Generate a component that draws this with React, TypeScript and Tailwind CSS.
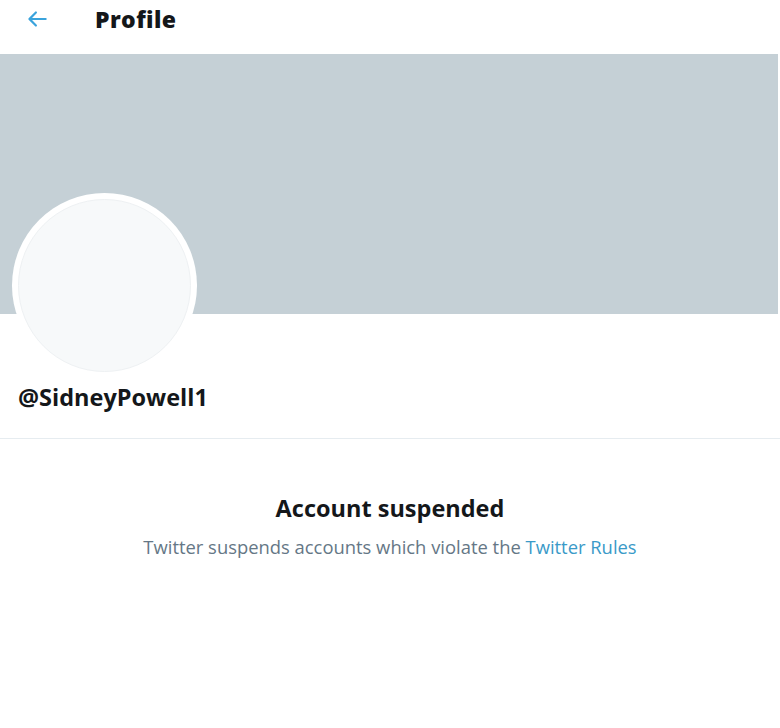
import React from 'react';

const font = { fontFamily: '"Open Sans", "Noto Sans", sans-serif' };

const BackArrow: React.FC = () => (
    <svg viewBox="0 0 24 24" className="w-[26px] h-[26px]" fill="#3aa3dc">
        <path d="M20 11H7.414l4.293-4.293a1 1 0 0 0-1.414-1.414l-6 6a1 1 0 0 0 0 1.414l6 6a1 1 0 0 0 1.414-1.414L7.414 13H20a1 1 0 1 0 0-2z" />
    </svg>
);

const App: React.FC = () => {
    return (
        <div className="w-[780px] h-[728px] bg-white overflow-hidden text-[#14171a]" style={font}>
            {/* Header */}
            <div className="h-[54px] flex items-start pt-[5px]">
                <div className="w-[74px] pl-[24px] pt-[1px]">
                    <BackArrow />
                </div>
                <h1 className="pl-[21px] text-[23px] font-extrabold leading-[28px] tracking-[0.4px]">Profile</h1>
            </div>

            {/* Banner */}
            <div className="h-[260px] w-[778px] bg-[#c5d0d6]" />

            {/* Avatar + handle */}
            <div className="relative h-[124px] px-[18px]">
                <div className="absolute left-[12px] top-[-121px] w-[185px] h-[185px] rounded-full bg-white p-[6px]">
                    <div className="w-full h-full rounded-full bg-[#f7f9fa] border border-[#eef1f3]" />
                </div>
                <div className="pt-[69px] text-[23.5px] font-bold leading-[28px]">@SidneyPowell1</div>
            </div>

            <div className="h-px bg-[#e6ecf0]" />

            {/* Suspended notice */}
            <div className="flex flex-col items-center pt-[54px]">
                <div className="text-[23.5px] font-bold leading-[30px]">Account suspended</div>
                <div className="mt-[12px] text-[18.4px] leading-[24px] text-[#657786]">
                    Twitter suspends accounts which violate the <span className="text-[#3a9ac8]">Twitter Rules</span>
                </div>
            </div>
        </div>
    );
};

export default App;
